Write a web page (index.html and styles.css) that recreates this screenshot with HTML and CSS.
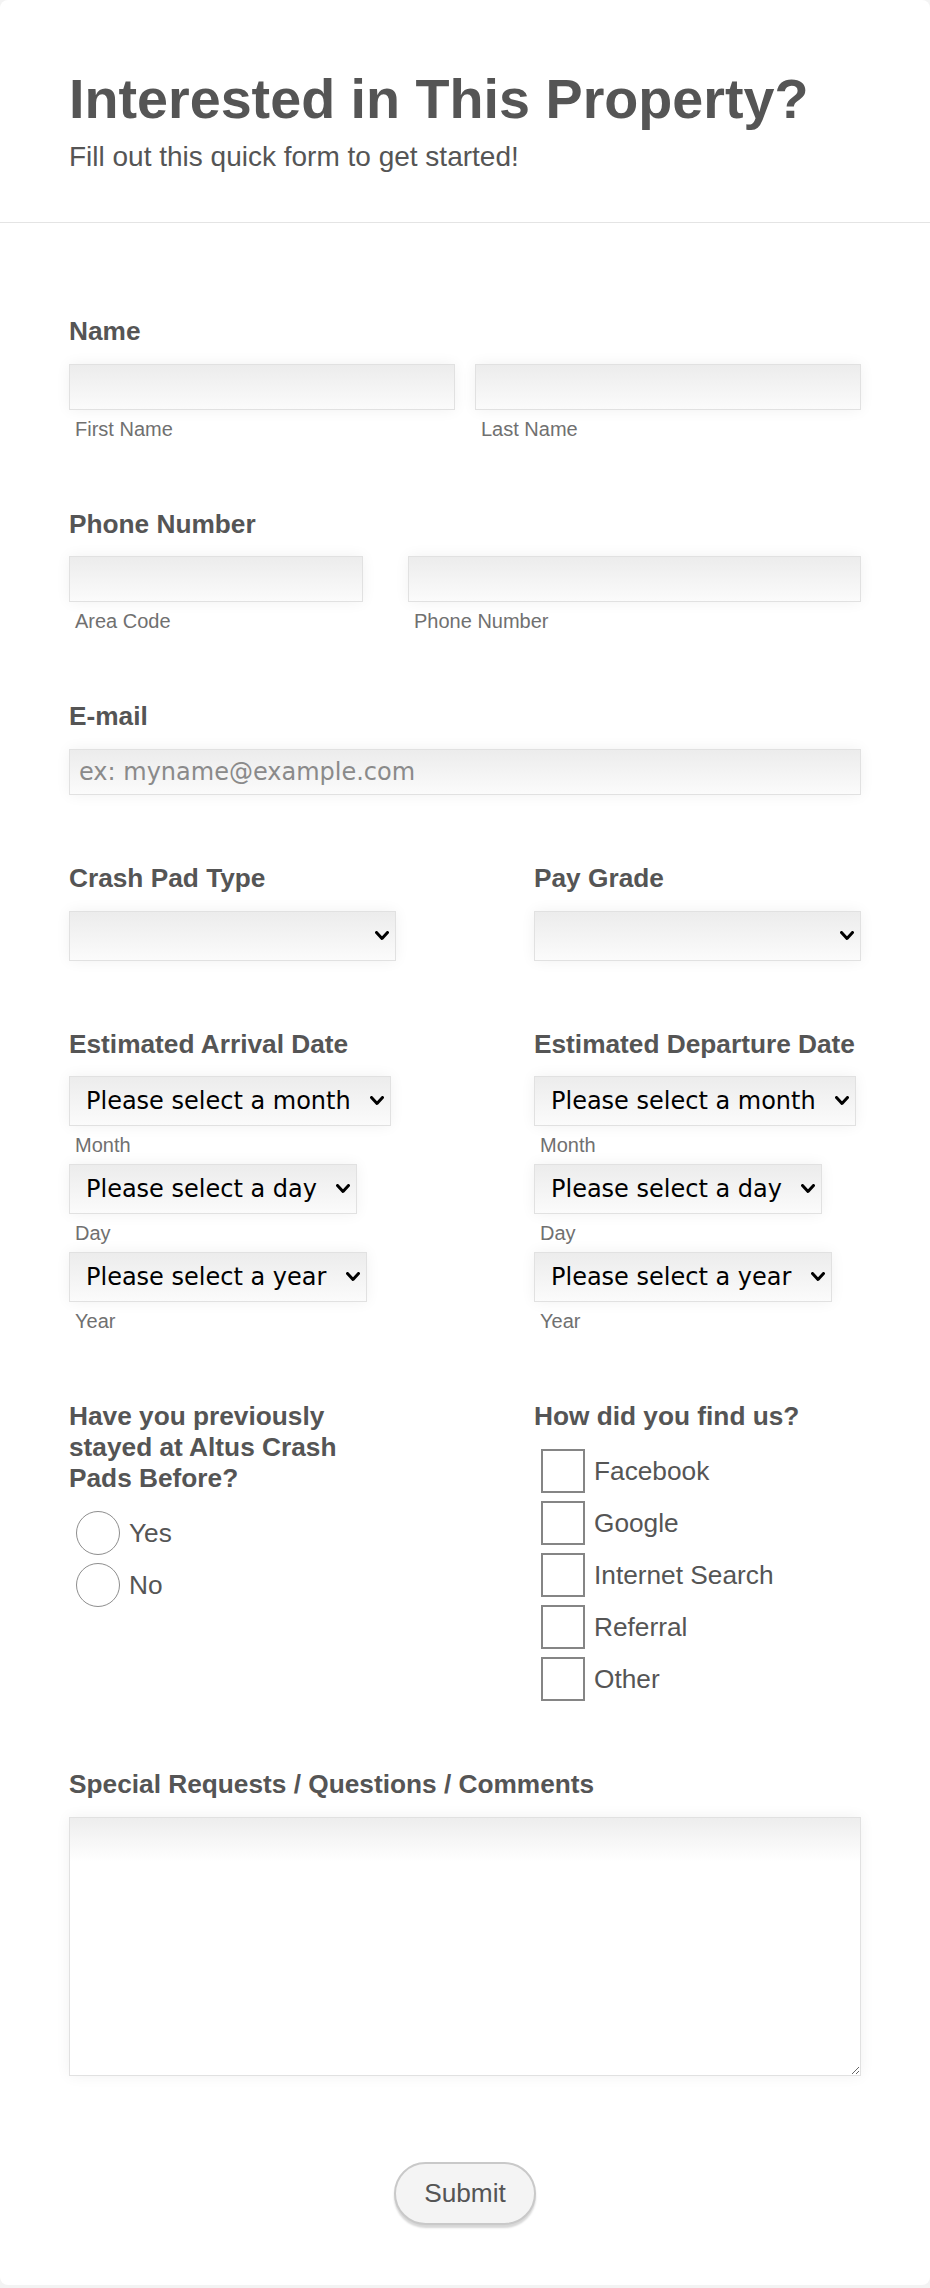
FILE: index.html
```html
<!DOCTYPE html>
<html lang="en">
<head>
<meta charset="utf-8">
<title>Interested in This Property?</title>
<link rel="stylesheet" href="styles.css">
</head>
<body>
<div class="card">
  <header class="form-header">
    <h1 class="form-title">Interested in This Property?</h1>
    <p class="form-subtitle">Fill out this quick form to get started!</p>
  </header>

  <ul class="form-list">
    <li class="field">
      <label class="field-label">Name</label>
      <div class="split split-name">
        <div class="sub-field">
          <input class="textbox" type="text">
          <span class="sublabel">First Name</span>
        </div>
        <div class="sub-field">
          <input class="textbox" type="text">
          <span class="sublabel">Last Name</span>
        </div>
      </div>
    </li>

    <li class="field">
      <label class="field-label">Phone Number</label>
      <div class="split split-phone">
        <div class="sub-field">
          <input class="textbox" type="tel">
          <span class="sublabel">Area Code</span>
        </div>
        <div class="sub-field">
          <input class="textbox" type="tel">
          <span class="sublabel">Phone Number</span>
        </div>
      </div>
    </li>

    <li class="field">
      <label class="field-label">E-mail</label>
      <input class="textbox" type="email" placeholder="ex: myname@example.com">
    </li>

    <li class="field-pair">
      <div class="col">
        <label class="field-label">Crash Pad Type</label>
        <span class="select-wrap full">
          <select class="select"><option></option></select>
          <svg class="chev" viewBox="0 0 14 10"><path d="M1.5 1.5 L7 7.5 L12.5 1.5"/></svg>
        </span>
      </div>
      <div class="col">
        <label class="field-label">Pay Grade</label>
        <span class="select-wrap full">
          <select class="select"><option></option></select>
          <svg class="chev" viewBox="0 0 14 10"><path d="M1.5 1.5 L7 7.5 L12.5 1.5"/></svg>
        </span>
      </div>
    </li>

    <li class="field-pair">
      <div class="col">
        <label class="field-label">Estimated Arrival Date</label>
        <div class="date-part">
          <span class="select-wrap">
            <select class="select"><option>Please select a month</option></select>
            <svg class="chev" viewBox="0 0 14 10"><path d="M1.5 1.5 L7 7.5 L12.5 1.5"/></svg>
          </span>
          <span class="sublabel">Month</span>
        </div>
        <div class="date-part">
          <span class="select-wrap">
            <select class="select"><option>Please select a day</option></select>
            <svg class="chev" viewBox="0 0 14 10"><path d="M1.5 1.5 L7 7.5 L12.5 1.5"/></svg>
          </span>
          <span class="sublabel">Day</span>
        </div>
        <div class="date-part">
          <span class="select-wrap">
            <select class="select"><option>Please select a year</option></select>
            <svg class="chev" viewBox="0 0 14 10"><path d="M1.5 1.5 L7 7.5 L12.5 1.5"/></svg>
          </span>
          <span class="sublabel">Year</span>
        </div>
      </div>
      <div class="col">
        <label class="field-label">Estimated Departure Date</label>
        <div class="date-part">
          <span class="select-wrap">
            <select class="select"><option>Please select a month</option></select>
            <svg class="chev" viewBox="0 0 14 10"><path d="M1.5 1.5 L7 7.5 L12.5 1.5"/></svg>
          </span>
          <span class="sublabel">Month</span>
        </div>
        <div class="date-part">
          <span class="select-wrap">
            <select class="select"><option>Please select a day</option></select>
            <svg class="chev" viewBox="0 0 14 10"><path d="M1.5 1.5 L7 7.5 L12.5 1.5"/></svg>
          </span>
          <span class="sublabel">Day</span>
        </div>
        <div class="date-part">
          <span class="select-wrap">
            <select class="select"><option>Please select a year</option></select>
            <svg class="chev" viewBox="0 0 14 10"><path d="M1.5 1.5 L7 7.5 L12.5 1.5"/></svg>
          </span>
          <span class="sublabel">Year</span>
        </div>
      </div>
    </li>

    <li class="field-pair">
      <div class="col">
        <label class="field-label">Have you previously stayed at Altus Crash Pads Before?</label>
        <div class="options">
          <label class="option"><input class="radio" type="radio" name="stayed"><span>Yes</span></label>
          <label class="option"><input class="radio" type="radio" name="stayed"><span>No</span></label>
        </div>
      </div>
      <div class="col">
        <label class="field-label">How did you find us?</label>
        <div class="options">
          <label class="option"><input class="check" type="checkbox"><span>Facebook</span></label>
          <label class="option"><input class="check" type="checkbox"><span>Google</span></label>
          <label class="option"><input class="check" type="checkbox"><span>Internet Search</span></label>
          <label class="option"><input class="check" type="checkbox"><span>Referral</span></label>
          <label class="option"><input class="check" type="checkbox"><span>Other</span></label>
        </div>
      </div>
    </li>

    <li class="field">
      <label class="field-label">Special Requests / Questions / Comments</label>
      <textarea class="textarea"></textarea>
    </li>

    <li class="submit-row">
      <button class="submit" type="button">Submit</button>
    </li>
  </ul>
</div>
</body>
</html>
```

FILE: styles.css
```css
* {
  box-sizing: border-box;
}

html,
body {
  margin: 0;
  padding: 0;
}

body {
  background: #f3f3f3;
  font-family: "Liberation Sans", Arial, sans-serif;
  color: #555;
}

.card {
  width: 930px;
  background: #fff;
  border-radius: 8px;
}

/* header */
.form-header {
  padding: 67px 69px 48px;
  border-bottom: 1px solid #e4e4e4;
}

.form-title {
  margin: 0;
  font-size: 55.7px;
  line-height: 64px;
  font-weight: 700;
  color: #555;
}

.form-subtitle {
  margin: 9px 0 0;
  font-size: 28px;
  line-height: 34px;
  color: #555;
}

/* list */
.form-list {
  list-style: none;
  margin: 0;
  padding: 59px 0 0;
}

.field {
  padding: 34px 69px;
}

.field-pair {
  display: grid;
  grid-template-columns: 1fr 1fr;
  padding: 34px 0;
}

.field-pair .col {
  padding: 0 69px;
  min-width: 0;
}

.field-label {
  display: block;
  font-size: 26.25px;
  line-height: 31px;
  font-weight: 700;
  color: #555;
  margin-bottom: 16.7px;
}

/* text inputs */
.split {
  display: grid;
}

.split-name {
  grid-template-columns: 1fr 1fr;
  column-gap: 20px;
}

.split-phone {
  grid-template-columns: 294px 1fr;
  column-gap: 45px;
}

.textbox {
  display: block;
  width: 100%;
  height: 46px;
  margin: 0;
  padding: 0 9px;
  border: 1px solid #e1e1e1;
  border-radius: 0;
  background: linear-gradient(#ececec, #fbfbfb);
  box-shadow: 0 0 14px rgba(0, 0, 0, 0.06);
  font-family: "DejaVu Sans", sans-serif;
  font-size: 24px;
  color: #333;
  outline: none;
}

.textbox::placeholder {
  color: #8a8a8a;
}

.sublabel {
  display: block;
  margin-top: 7px;
  padding-left: 6px;
  font-size: 20px;
  line-height: 24px;
  color: #707070;
}

/* selects */
.select-wrap {
  position: relative;
  display: inline-block;
  vertical-align: top;
}

.select-wrap.full {
  display: block;
}

.select {
  -webkit-appearance: none;
  appearance: none;
  display: block;
  height: 50px;
  margin: 0;
  padding: 0 39px 0 16px;
  border: 1px solid #e1e1e1;
  border-radius: 0;
  background: linear-gradient(#ececec, #fbfbfb);
  box-shadow: 0 0 14px rgba(0, 0, 0, 0.06);
  font-family: "DejaVu Sans", sans-serif;
  font-size: 24px;
  color: #000;
  outline: none;
}

.select-wrap.full .select {
  width: 100%;
}

.chev {
  position: absolute;
  right: 7px;
  top: 50%;
  width: 14px;
  height: 10px;
  margin-top: -5px;
  pointer-events: none;
}

.chev path {
  fill: none;
  stroke: #000;
  stroke-width: 3;
  stroke-linecap: round;
  stroke-linejoin: round;
}

.date-part + .date-part {
  margin-top: 7px;
}

/* radios and checkboxes */
.options {
  display: flex;
  flex-direction: column;
  gap: 8px;
  padding-left: 7px;
}

.option {
  display: flex;
  align-items: center;
  gap: 9px;
  font-size: 26.25px;
  line-height: 31px;
  color: #555;
}

.radio,
.check {
  -webkit-appearance: none;
  appearance: none;
  flex: none;
  width: 44px;
  height: 44px;
  margin: 0;
  background: #fff;
}

.radio {
  border: 1.6px solid #8e8e8e;
  border-radius: 50%;
}

.check {
  border: 2px solid #858585;
  border-radius: 0;
}

/* textarea */
.textarea {
  display: block;
  width: 100%;
  height: 259px;
  margin: 2px 0 0;
  padding: 9px;
  border: 1px solid #e1e1e1;
  border-radius: 0;
  background: linear-gradient(#ededed, #ffffff 44px);
  box-shadow: 0 0 14px rgba(0, 0, 0, 0.06);
  font-family: "DejaVu Sans", sans-serif;
  font-size: 24px;
  outline: none;
}

/* submit */
.submit-row {
  padding: 52px 0 60px;
  text-align: center;
}

.submit {
  height: 63px;
  padding: 0 28px;
  border: 2px solid #c9c9c9;
  border-radius: 32px;
  background: #f4f4f4;
  box-shadow: 0 3px 2px rgba(0, 0, 0, 0.16);
  font-family: "Liberation Sans", Arial, sans-serif;
  font-size: 26.25px;
  color: #555;
  cursor: pointer;
}
```
